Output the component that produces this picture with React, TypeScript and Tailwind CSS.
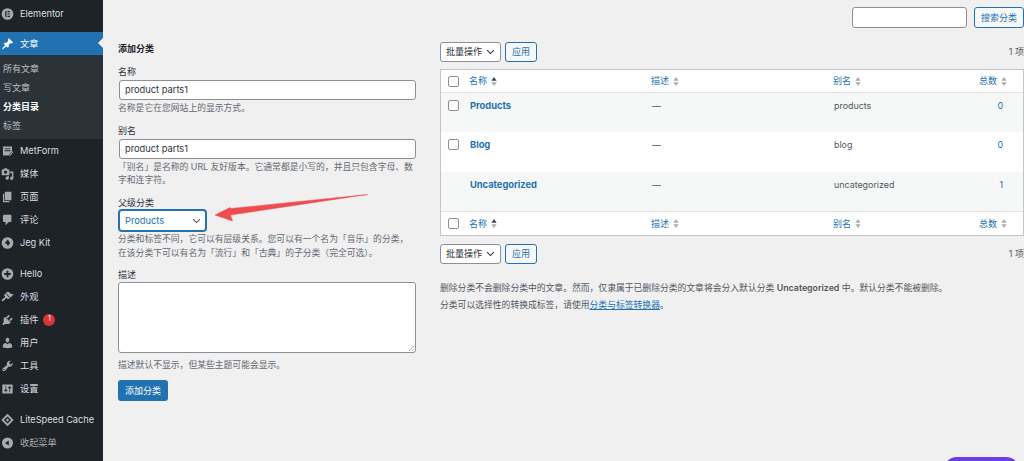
import React from "react";

const FONT = "[font-family:Inter,'Noto_Sans_CJK_SC',sans-serif]";

type IconProps = { d: string };
const Dash = ({ d }: IconProps) => (
  <svg viewBox="0 0 20 20" className="w-[14px] h-[14px] fill-current">
    <path d={d} fillRule="evenodd" />
  </svg>
);

const P = {
  pin: "M10.44 3.02l1.82-1.82 6.36 6.35-1.83 1.82c-1.05-.68-2.48-.57-3.41.36l-.75.75c-.92.93-1.04 2.35-.35 3.41l-1.83 1.82-2.41-2.41-2.8 2.79c-.42.42-3.38 2.71-3.8 2.29s1.86-3.39 2.28-3.81l2.79-2.79L4.1 9.36l1.83-1.82c1.05.69 2.48.57 3.4-.36l.75-.75c.93-.92 1.05-2.35.36-3.41z",
  media: "M13 11V4c0-.55-.45-1-1-1h-1.67L9 1H5L3.67 3H2c-.55 0-1 .45-1 1v7c0 .55.45 1 1 1h10c.55 0 1-.45 1-1zM7 4.5c1.38 0 2.5 1.12 2.5 2.5S8.38 9.5 7 9.5 4.5 8.38 4.5 7 5.62 4.5 7 4.5zM14 6h5v10.5c0 1.38-1.12 2.5-2.5 2.5S14 17.88 14 16.5s1.12-2.5 2.5-2.5c.17 0 .34.02.5.05V9h-3V6zm-4 8.05V13h2v3.5c0 1.38-1.12 2.5-2.5 2.5S7 17.88 7 16.5 8.12 14 9.5 14c.17 0 .34.02.5.05z",
  page: "M6 15V2h10v13H6zm-1 1h8v2H3V5h2v11z",
  comment: "M5 2h9c1.1 0 2 .9 2 2v7c0 1.1-.9 2-2 2h-2l-5 5v-5H5c-1.1 0-2-.9-2-2V4c0-1.1.9-2 2-2z",
  brush: "M14.48 11.06L7.41 3.99l1.5-1.5c.5-.56 2.3-.47 3.51.32 1.21.8 1.43 1.28 2.91 2.1 1.18.64 2.45 1.26 4.45.85zM13.77 11.77L6.7 4.7 4.93 6.47c-.39.39-.39 1.02 0 1.41l1.06 1.06c.39.39.39 1.03 0 1.42-.6.6-1.43 1.11-2.21 1.69-.35.26-.7.53-1.01.84-1.34 1.34-2 3-1.4 3.6.6.6 2.27-.06 3.6-1.4.31-.31.58-.66.84-1.01.58-.78 1.09-1.61 1.69-2.21.39-.39 1.03-.39 1.42 0l1.06 1.06c.39.39 1.02.39 1.41 0z",
  plug: "M13.11 4.36L9.87 7.6 8 5.73l3.24-3.24c.35-.34 1.05-.2 1.56.32.52.51.66 1.21.31 1.55zm-8 1.77l.91-1.12 9.01 9.01-1.19.84c-.71.71-2.63 1.16-3.82 1.16H6.14L4.9 17.26c-.59.59-1.54.59-2.12 0-.59-.58-.59-1.53 0-2.12l1.24-1.24v-3.88c0-1.13.4-3.19 1.09-3.89zm7.26 3.97l3.24-3.24c.34-.35 1.04-.21 1.55.31.52.51.66 1.21.31 1.55l-3.24 3.25z",
  user: "M10 9.25c-2.27 0-2.73-3.44-2.73-3.44C7 4.02 7.82 2 9.97 2c2.16 0 2.98 2.02 2.71 3.81 0 0-.41 3.44-2.68 3.44zm0 2.57L12.72 10c2.39 0 4.52 2.33 4.52 4.53v2.49s-3.65 1.13-7.24 1.13c-3.65 0-7.24-1.13-7.24-1.13v-2.49c0-2.25 1.94-4.48 4.47-4.48z",
  tool: "M16.68 9.77c-1.34 1.34-3.3 1.67-4.95.99l-5.41 6.52c-.99.99-2.59.99-3.58 0s-.99-2.59 0-3.57l6.52-5.42c-.68-1.65-.35-3.61.99-4.95 1.28-1.28 3.12-1.62 4.72-1.06l-2.89 2.89 2.82 2.82 2.86-2.87c.53 1.58.18 3.39-1.08 4.65zM3.81 16.21c.4.39 1.04.39 1.43 0 .4-.4.4-1.04 0-1.43-.39-.4-1.03-.4-1.43 0-.39.39-.39 1.03 0 1.43z",
  settings: "M18 16V4c0-.55-.45-1-1-1H3c-.55 0-1 .45-1 1v12c0 .55.45 1 1 1h14c.55 0 1-.45 1-1zM8 11h1c.55 0 1 .45 1 1s-.45 1-1 1H8v1.5c0 .28-.22.5-.5.5s-.5-.22-.5-.5V13H6c-.55 0-1-.45-1-1s.45-1 1-1h1V5.5c0-.28.22-.5.5-.5s.5.22.5.5V11zm5-2h-1c-.55 0-1-.45-1-1s.45-1 1-1h1V5.5c0-.28.22-.5.5-.5s.5.22.5.5V7h1c.55 0 1 .45 1 1s-.45 1-1 1h-1v5.5c0 .28-.22.5-.5.5s-.5-.22-.5-.5V9z",
  collapse: "M10 1.5a8.500 8.500 0 1 0 0 17 8.500 8.500 0 0 0 0-17zm2 12.400V6.100L6.200 10z",
  elementor: "M10 1a9 9 0 1 0 0 18 9 9 0 0 0 0-18zM6.500 5.500h1.800v9H6.500zm3.400 0h3.800v1.800H9.900zm0 3.600h3.800v1.800H9.900zm0 3.600h3.800v1.800H9.900z",
  metform: "M3 3h14v7.500L11.500 17H3zM5.500 6v1.300h9V6zm0 3v1.300h9V9zM12.500 17l5.500-6.500 1 1-5 6z",
  jeg: "M10 1a9 9 0 1 0 0 18 9 9 0 0 0 0-18zM10.500 4.500l3.500 5.500-3.500 5-1.300-3.500-3.700-1.200z",
  hello: "M10 1a9 9 0 1 0 0 18 9 9 0 0 0 0-18zM8.600 5h2.800v3.600H15v2.800h-3.600V15H8.600v-3.600H5V8.600h3.600z",
  lite: "M10 .5L19.500 10 10 19.500.5 10zM10 4.500L4.500 10l5.500 5.500 5.500-5.500zM10 7.500l2.500 2.500-2.500 2.500L7.500 10z",
};

type MenuProps = { icon: string; label: string; className?: string; badge?: boolean; dim?: boolean };

const MenuItem = ({ icon, label, className = "", badge, dim }: MenuProps) => (
  <div className={`flex items-center h-[23px] pl-[1px] ${dim ? "text-[#a7aaad]" : "text-[#dcdfe1]"} ${className}`}>
    <span className="w-[13px] flex justify-center text-[#a7aaad]">
      <Dash d={icon} />
    </span>
    <span className="ml-[6px] text-[9.200px] leading-none whitespace-nowrap">{label}</span>
    {badge && (
      <span className="ml-[5px] w-[12px] h-[12px] rounded-full bg-[#d63638] text-white text-[7px] flex items-center justify-center">
        1
      </span>
    )}
  </div>
);

const SortIcon = ({ active }: { active?: boolean }) => (
  <svg viewBox="0 0 8 14" className="w-[6px] h-[11px] ml-[4px]">
    <path d="M4 1l3.500 5h-7z" className={active ? "fill-[#3c434a]" : "fill-[#a7aaad]"} />
    <path d="M4 13l3.500-5h-7z" className="fill-[#a7aaad]" />
  </svg>
);

const Check = () => <span className="block w-[11px] h-[11px] rounded-[2px] border border-[#8c8f94] bg-white" />;

const Chevron = ({ className = "" }: { className?: string }) => (
  <svg viewBox="0 0 12 8" className={`w-[9px] h-[6px] fill-none stroke-current stroke-[1.4] ${className}`}>
    <path d="M1.500 1.500L6 6l4.500-4.500" />
  </svg>
);

const HeadRow = ({ className }: { className: string }) => (
  <div className={`flex items-center bg-white text-[9px] text-[#2271b1] ${className}`}>
    <span className="w-[28px] pl-[7px]"><Check /></span>
    <span className="w-[182px] flex items-center">名称<SortIcon active /></span>
    <span className="w-[182px] flex items-center">描述<SortIcon /></span>
    <span className="w-[146px] flex items-center">别名<SortIcon /></span>
    <span className="w-[43px] flex items-center">总数<SortIcon /></span>
  </div>
);

const Row = ({ name, slug, count, alt, check = true }: { name: string; slug: string; count: string; alt?: boolean; check?: boolean }) => (
  <div className={`flex items-start h-[39.330px] pt-[6px] text-[8.900px] leading-[13px] ${alt ? "bg-[#f6f7f7]" : "bg-white"}`}>
    <span className="w-[28px] pl-[7px] pt-[1px]">{check && <Check />}</span>
    <span className="w-[182px] pl-[1px] font-bold text-[9.300px] text-[#2271b1]">{name}</span>
    <span className="w-[182px] pl-[1px] text-[#50575e]">—</span>
    <span className="w-[146px] pl-[1px] text-[#50575e]">{slug}</span>
    <span className="w-[24px] text-right text-[#2271b1]">{count}</span>
  </div>
);

const BulkBar = ({ className = "" }: { className?: string }) => (
  <div className={`flex items-center justify-between h-[20px] ${className}`}>
    <div className="flex gap-[4px]">
      <div className="w-[61px] h-[20px] rounded-[3px] border border-[#8c8f94] bg-white flex items-center justify-between pl-[5px] pr-[5px] text-[9px] text-[#2c3338] whitespace-nowrap">
        批量操作<Chevron />
      </div>
      <div className="w-[32px] h-[20px] rounded-[3px] border border-[#2271b1] bg-[#f6f7f7] flex items-center justify-center text-[9px] text-[#2271b1]">
        应用
      </div>
    </div>
    <span className="text-[9px] text-[#50575e] whitespace-nowrap">1 项</span>
  </div>
);

const Hint = ({ children, className = "" }: { children: React.ReactNode; className?: string }) => (
  <p className={`text-[8.800px] leading-[13.500px] text-[#646970] ${className}`}>{children}</p>
);

const Label = ({ children, className = "" }: { children: React.ReactNode; className?: string }) => (
  <div className={`text-[9px] leading-[12px] text-[#2c3338] ${className}`}>{children}</div>
);

const TextBox = ({ value }: { value: string }) => (
  <div className="mt-[2px] ml-[1px] w-[297px] h-[20px] rounded-[3px] border border-[#8c8f94] bg-white flex items-center px-[5px] text-[9.300px] text-[#2c3338]">
    {value}
  </div>
);

export default function App() {
  return (
    <div className={`relative flex w-[1024px] h-[461px] overflow-hidden bg-[#f0f0f1] ${FONT}`}>
      <aside className="w-[103px] shrink-0 bg-[#1d2327] pt-[2px]">
        <MenuItem icon={P.elementor} label="Elementor" />
        <div className="relative mt-[7px] bg-[#2271b1]">
          <MenuItem icon={P.pin} label="文章" className="text-white [&>span:first-child]:text-white" />
          <span className="absolute right-0 top-[6px] border-y-[5px] border-y-transparent border-r-[5px] border-r-[#f0f0f1]" />
        </div>
        <div className="bg-[#2c3338] h-[84px] pt-[4px] pl-[3px] text-[9px] text-[#bcc0c3]">
          <div className="h-[19px] flex items-center">所有文章</div>
          <div className="h-[19px] flex items-center">写文章</div>
          <div className="h-[19px] flex items-center font-semibold text-white">分类目录</div>
          <div className="h-[19px] flex items-center">标签</div>
        </div>
        <MenuItem icon={P.metform} label="MetForm" />
        <MenuItem icon={P.media} label="媒体" />
        <MenuItem icon={P.page} label="页面" />
        <MenuItem icon={P.comment} label="评论" />
        <MenuItem icon={P.jeg} label="Jeg Kit" />
        <div className="mt-[8px]">
          <MenuItem icon={P.hello} label="Hello" />
          <MenuItem icon={P.brush} label="外观" />
          <MenuItem icon={P.plug} label="插件" badge />
          <MenuItem icon={P.user} label="用户" />
          <MenuItem icon={P.tool} label="工具" />
          <MenuItem icon={P.settings} label="设置" />
        </div>
        <div className="mt-[8px]">
          <MenuItem icon={P.lite} label="LiteSpeed Cache" />
          <MenuItem icon={P.collapse} label="收起菜单" dim />
        </div>
      </aside>

      <main className="flex-1 min-w-0 pl-[15px]">
        <div className="flex justify-end gap-[7px] pt-[7px] h-[28px]">
          <div className="w-[115px] h-[21px] rounded-[3px] border border-[#8c8f94] bg-white" />
          <div className="w-[50px] h-[21px] rounded-[3px] border border-[#2271b1] bg-[#f6f7f7] flex items-center justify-center text-[9px] text-[#2271b1] whitespace-nowrap">
            搜索分类
          </div>
        </div>
        <div className="flex">
          <section className="w-[322px] shrink-0">
            <h2 className="mt-[15px] text-[9px] leading-[12px] font-semibold text-[#1d2327]">添加分类</h2>
            <Label className="mt-[11px]">名称</Label>
            <TextBox value="product parts1" />
            <Hint className="mt-[1px]">名称是它在您网站上的显示方式。</Hint>
            <Label className="mt-[10px]">别名</Label>
            <TextBox value="product parts1" />
            <Hint className="mt-[1px] w-[298px]">「别名」是名称的 URL 友好版本。它通常都是小写的，并且只包含字母、数字和连字符。</Hint>
            <Label className="mt-[10.500px]">父级分类</Label>
            <div className="mt-[1px] ml-[1px] w-[87px] h-[21px] rounded-[3px] border border-[#2271b1] ring-1 ring-[#2271b1] bg-white flex items-center justify-between pl-[5px] pr-[4px] text-[9.300px] text-[#2271b1]">
              Products<Chevron className="text-[#50575e]" />
            </div>
            <Hint className="mt-[1px] w-[298px]">分类和标签不同，它可以有层级关系。您可以有一个名为「音乐」的分类，在该分类下可以有名为「流行」和「古典」的子分类（完全可选）。</Hint>
            <Label className="mt-[10px]">描述</Label>
            <div className="relative mt-[1px] w-[298px] h-[71px] rounded-[3px] border border-[#8c8f94] bg-white">
              <svg viewBox="0 0 8 8" className="absolute right-[1px] bottom-[1px] w-[6px] h-[6px] stroke-[#8c8f94] fill-none">
                <path d="M1 8L8 1M5 8l3-3" />
              </svg>
            </div>
            <Hint className="mt-[5px]">描述默认不显示，但某些主题可能会显示。</Hint>
            <div className="mt-[8.500px] w-[50px] h-[21px] rounded-[3px] bg-[#2271b1] flex items-center justify-center text-[9px] text-white">
              添加分类
            </div>
          </section>

          <section className="flex-1 min-w-0">
            <BulkBar className="mt-[14px]" />
            <div className="mt-[7px] border border-[#c3c4c7] bg-white">
              <HeadRow className="h-[23px] border-b border-[#e3e4e6]" />
              <Row name="Products" slug="products" count="0" alt />
              <Row name="Blog" slug="blog" count="0" />
              <Row name="Uncategorized" slug="uncategorized" count="1" alt check={false} />
              <HeadRow className="h-[24px] pt-[1px] border-t border-[#e3e4e6]" />
            </div>
            <BulkBar className="mt-[8px]" />
            <p className="mt-[15.500px] text-[8.800px] leading-[17px] text-[#50575e] whitespace-nowrap">
              删除分类不会删除分类中的文章。然而，仅隶属于已删除分类的文章将会分入默认分类 <b className="font-semibold">Uncategorized</b> 中。默认分类不能被删除。
            </p>
            <p className="text-[8.800px] leading-[17px] text-[#50575e]">
              分类可以选择性的转换成标签，请使用<span className="text-[#2271b1] underline">分类与标签转换器</span>。
            </p>
          </section>
        </div>
      </main>

      <svg viewBox="0 0 1024 461" className="absolute inset-0 w-[1024px] h-[461px] pointer-events-none">
        <path d="M367.500 194.500L231 208.500 230 207.500 215 215 232.500 221 230.500 215z" fill="#ee4c4f" stroke="#ee4c4f" strokeWidth="0.500" strokeLinejoin="round" />
      </svg>
      <div className="absolute left-[943px] top-[457px] w-[77px] h-[30px] rounded-[14px] bg-[#6a3fe0]" />
    </div>
  );
}
